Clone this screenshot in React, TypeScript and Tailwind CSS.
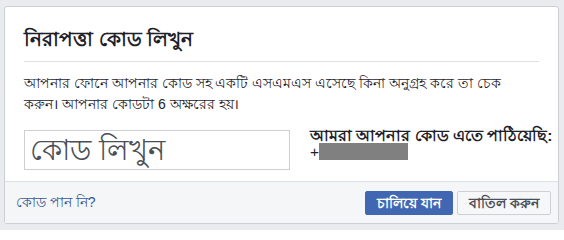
export default function App() {
  return (
    <div className="w-[564px] h-[230px] bg-[#e9ebee] pt-[6px] pl-[4px] font-['Liberation_Sans','Noto_Sans',sans-serif] text-[#1d2129]">
      <div className="w-[555px] h-[218px] bg-white border border-[#ccd0d5] rounded-[3px] flex flex-col overflow-hidden">
        <div className="px-[19px] flex-1">
          <div className="pt-[19px] pb-[9px] border-b border-[#dddfe2]">
            <h2 className="text-[20px] font-bold leading-[26px]">নিরাপত্তা কোড লিখুন</h2>
          </div>
          <p className="pt-[11px] w-[490px] text-[14px] leading-[21px]">
            আপনার ফোনে আপনার কোড সহ একটি এসএমএস এসেছে কিনা অনুগ্রহ করে তা চেক করুন। আপনার কোডটা 6 অক্ষরের হয়।
          </p>
          <div className="flex items-start mt-[15px]">
            <input
              placeholder="কোড লিখুন"
              className="w-[266px] h-[40px] border border-[#ccd0d5] px-[5px] text-[29px] leading-[38px] placeholder:text-[#4b4f56] outline-none"
            />
            <div className="ml-[20px] -mt-[2px] text-[15.5px] leading-[15px]">
              <div className="font-bold whitespace-nowrap">আমরা আপনার কোড এতে পাঠিয়েছি:</div>
              <div className="flex items-center">
                <span>+</span>
                <span className="inline-block w-[89px] h-[17px] bg-[#808080]" />
              </div>
            </div>
          </div>
        </div>
        <div className="h-[42px] bg-[#f5f6f7] border-t border-[#dddfe2] flex items-center pl-[11px] pr-[7px]">
          <a className="text-[14px] text-[#365899]">কোড পান নি?</a>
          <div className="ml-auto flex gap-[4px]">
            <button className="h-[24px] px-[11px] bg-[#4267b2] border border-[#4267b2] rounded-[2px] text-white text-[14px] font-bold leading-[20px]">চালিয়ে যান</button>
            <button className="h-[24px] px-[11px] bg-[#f6f7f9] border border-[#ced0d4] rounded-[2px] text-[#4b4f56] text-[14px] font-bold leading-[20px]">বাতিল করুন</button>
          </div>
        </div>
      </div>
    </div>
  );
}
